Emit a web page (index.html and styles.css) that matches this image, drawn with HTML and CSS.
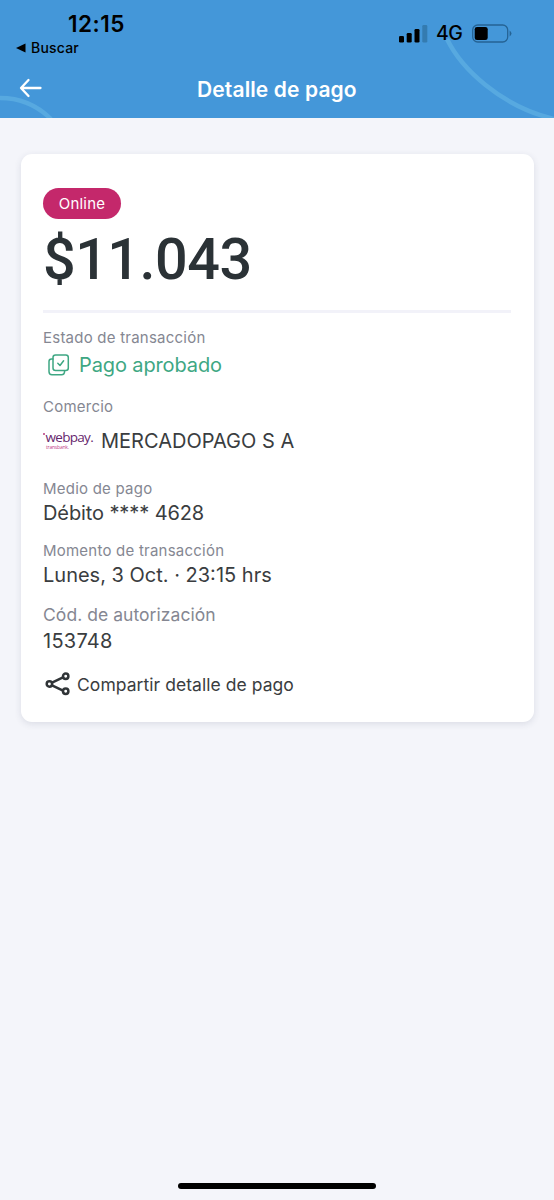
FILE: index.html
```
<!DOCTYPE html>
<html lang="es">
<head>
<meta charset="utf-8">
<title>Detalle de pago</title>
<link rel="stylesheet" href="styles.css">
</head>
<body>
<header class="header">
  <svg class="header-art" viewBox="0 0 554 118" aria-hidden="true">
    <path d="M-4 98C18 97 36 104 51 119M447 39C461 68 500 106 554 119" fill="none" stroke="#57a9e0" stroke-width="4.5"/>
  </svg>
  <div class="status">
    <div class="status-left">
      <div class="time">12:15</div>
      <div class="back-app">
        <svg width="10" height="10" viewBox="0 0 10 10"><path d="M0 5L9.5 .5V9.5Z"/></svg>
        <span>Buscar</span>
      </div>
    </div>
    <div class="status-right">
      <svg width="30" height="19" viewBox="0 0 30 19">
        <rect x="1" y="12" width="5" height="6.5" rx="1.3"/>
        <rect x="8.7" y="9" width="5" height="9.5" rx="1.3"/>
        <rect x="16.5" y="5" width="5" height="13.5" rx="1.3"/>
        <rect x="24.3" y="1" width="5" height="17.5" rx="1.3" fill="#347bb0"/>
      </svg>
      <span class="network">4G</span>
      <svg width="41" height="19" viewBox="0 0 41 19">
        <rect x=".7" y="1" width="35" height="17" rx="5" fill="none" stroke="#256394" stroke-width="1.3"/>
        <rect x="2.7" y="3" width="13" height="13" rx="2.3"/>
        <path d="M37.6 6.5Q41.4 9.5 37.6 12.5Z" fill="#256394"/>
      </svg>
    </div>
  </div>
  <nav class="nav">
    <svg width="24" height="22" viewBox="0 0 24 22"><path d="M21.5 11H2.5M9.5 3L2 11L9.5 19" fill="none" stroke="#fff" stroke-width="2.3" stroke-linecap="round" stroke-linejoin="round"/></svg>
    <h1 class="title">Detalle de pago</h1>
  </nav>
</header>
<main class="card">
  <span class="badge">Online</span>
  <div class="amount">$11.043</div>
  <hr class="divider">
  <section class="estado">
    <div class="label">Estado de transacción</div>
    <div class="value approved">
      <svg width="24" height="24" viewBox="0 0 24 24" fill="none" stroke="#3ea783" stroke-width="1.5" stroke-linecap="round" stroke-linejoin="round">
        <rect x="6" y="2" width="15.3" height="15.5" rx="2.5"/>
        <path d="M6 6H4.5Q2 6 2 8.5V18.5Q2 21.8 5 21.8H14.5Q17.6 21.8 17.6 18M10.8 10.3L13 12.5L16.6 7.8"/>
      </svg>
      <span>Pago aprobado</span>
    </div>
  </section>
  <section class="comercio">
    <div class="label">Comercio</div>
    <div class="value merchant">
      <span class="logo"><span class="logo-name"><i></i>webpay.</span><span class="logo-sub">transbank.</span></span>
      <span>MERCADOPAGO S A</span>
    </div>
  </section>
  <section class="medio">
    <div class="label">Medio de pago</div>
    <div class="value">Débito **** 4628</div>
  </section>
  <section class="momento">
    <div class="label">Momento de transacción</div>
    <div class="value">Lunes, 3 Oct. · 23:15 hrs</div>
  </section>
  <section class="codigo">
    <div class="label">Cód. de autorización</div>
    <div class="value">153748</div>
  </section>
  <div class="share">
    <svg width="26" height="24" viewBox="0 0 26 24" fill="none" stroke="#303437" stroke-width="2.5">
      <path d="M6.5 10.8L18 5.4M6.5 13.2L18 18.6"/>
      <circle cx="4.4" cy="12" r="2.7"/><circle cx="20.7" cy="4.3" r="2.7"/><circle cx="20.7" cy="19.3" r="2.7"/>
    </svg>
    <span>Compartir detalle de pago</span>
  </div>
</main>
<footer class="home"></footer>
</body>
</html>
```
FILE: styles.css
```
* { box-sizing: border-box; }
body {
  margin: 0;
  height: 1200px;
  display: flex;
  flex-direction: column;
  background: #f4f5fa;
  font-family: Inter, "Liberation Sans", sans-serif;
  color: #3a3d40;
  overflow: hidden;
}
svg { display: block; flex: none; }
.header {
  position: relative;
  flex: none;
  height: 118px;
  background: #4497d9;
}
.header-art { position: absolute; inset: 0; width: 554px; height: 118px; }
.status {
  position: relative;
  height: 60px;
  display: flex;
  justify-content: space-between;
  color: #000;
}
.status-left { padding-top: 12px; width: 140px; }
.time { padding-left: 68px; font-size: 22.5px; line-height: 24px; font-weight: 600; letter-spacing: .5px; white-space: nowrap; }
.back-app { display: flex; align-items: center; gap: 5px; padding-left: 16px; font-size: 14px; line-height: 24px; font-weight: 500; letter-spacing: .2px; }
.status-right { display: flex; align-items: center; height: 20px; margin: 23px 41px 0 0; }
.network { width: 27px; margin: 0 9px 0 8px; font-size: 19.5px; line-height: 20px; font-weight: 500; letter-spacing: -.5px; }
.nav { position: relative; display: flex; height: 58px; padding: 17px 0 0 19px; }
.title {
  margin: 0;
  padding-left: 154px;
  font-size: 21px;
  line-height: 25px;
  font-weight: 600;
  letter-spacing: .12px;
  color: #fff;
  white-space: nowrap;
}
.card {
  flex: none;
  width: 513px;
  height: 568px;
  margin: 36px 0 0 20.5px;
  padding: 34px 22.5px 0;
  background: #fff;
  border-radius: 11px;
  box-shadow: 0 2px 7px rgba(40, 50, 80, .12);
}
.badge {
  display: flex;
  align-items: center;
  justify-content: center;
  width: 78px;
  height: 31px;
  border-radius: 16px;
  background: #c4286b;
  color: #fff;
  font-size: 15px;
  letter-spacing: .2px;
}
.amount {
  height: 91px;
  font: 500 57.5px/82px Roboto, sans-serif;
  letter-spacing: -.5px;
  color: #2b3236;
}
.divider { height: 3px; margin: 0; border: 0; background: #f2f2f9; }
.label { height: 24px; font-size: 15px; line-height: 22px; letter-spacing: .23px; color: #858792; white-space: nowrap; }
.value { height: 26px; font-size: 20px; line-height: 26px; white-space: nowrap; }
.estado { height: 82px; padding-top: 14px; }
.approved { display: flex; align-items: center; gap: 8px; margin-top: 1px; padding-left: 4px; letter-spacing: -.12px; color: #3ea783; }
.comercio { height: 83px; }
.comercio .label { height: 33px; line-height: 23px; }
.merchant { display: flex; align-items: center; }
.logo { display: flex; flex-direction: column; width: 58px; height: 23px; }
.logo-name { display: flex; font: 500 13.5px/14px "Open Sans", sans-serif; color: #66266d; letter-spacing: -.7px; }
.logo-name i { width: 2px; height: 2px; margin: 3px .5px 0 0; background: #b7377d; border-radius: 50%; }
.logo-sub { padding-left: 3px; font: 5px/6px "Open Sans", sans-serif; letter-spacing: -.2px; color: #c23b86; }
.medio { height: 62px; letter-spacing: -.1px; }
.momento { height: 64px; }
.medio .label, .momento .label { height: 22px; }
.codigo { height: 65px; }
.codigo .label { height: 24px; font-size: 17.5px; letter-spacing: .05px; }
.codigo .value { letter-spacing: .25px; }
.share { display: flex; align-items: center; gap: 6px; height: 30px; padding-left: 2px; font-size: 17.5px; letter-spacing: .05px; white-space: nowrap; }
.home { width: 198px; height: 6px; margin: auto auto 11px 178px; border-radius: 3px; background: #000; }
```
